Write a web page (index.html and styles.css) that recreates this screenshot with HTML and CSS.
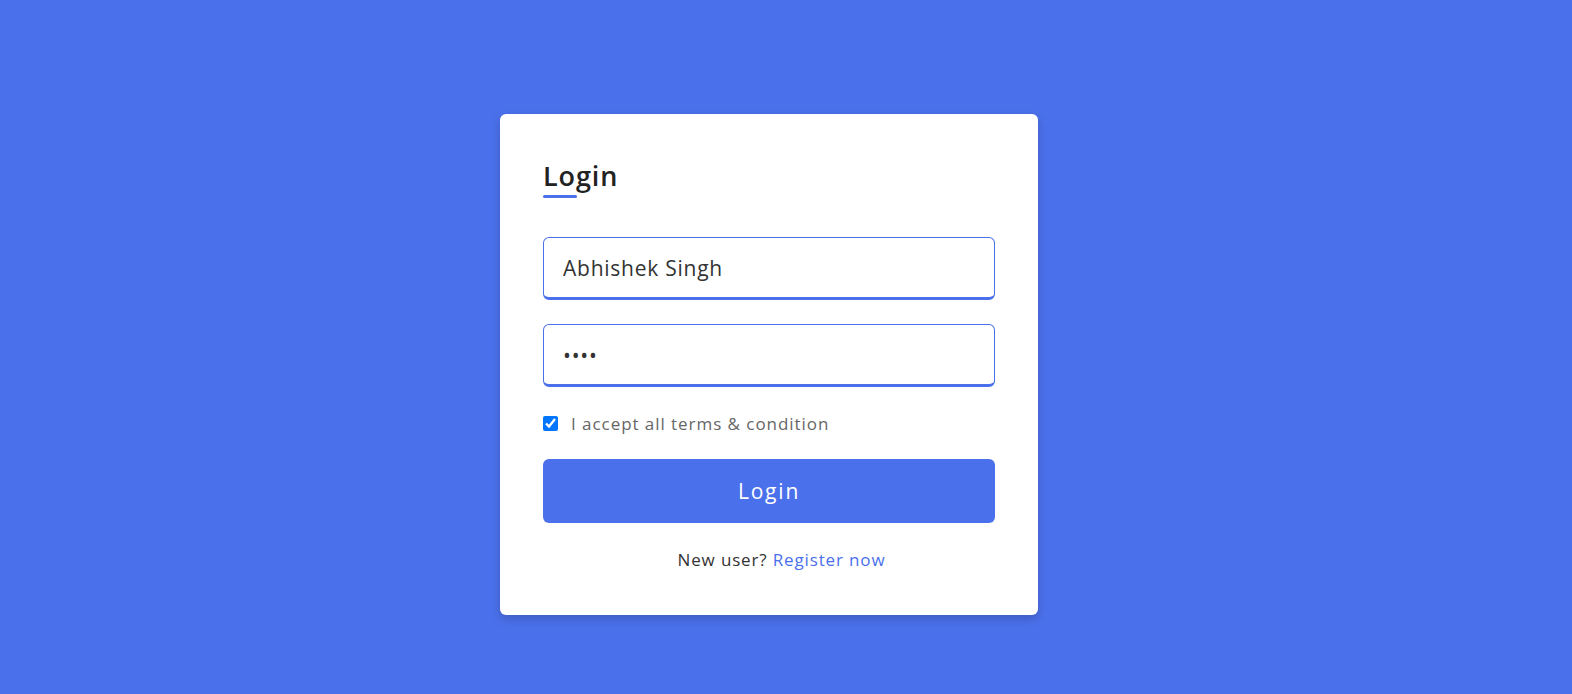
FILE: index.html
```html
<!DOCTYPE html>
<html lang="en">
<head>
<meta charset="utf-8">
<title>Login</title>
<link rel="stylesheet" href="styles.css">
</head>
<body>
<main class="page">
  <form class="card">
    <h2 class="title">Login</h2>
    <input class="field" type="text" value="Abhishek Singh">
    <input class="field" type="password" value="1234">
    <label class="terms">
      <input class="check" type="checkbox" checked>
      <span>I accept all terms &amp; condition</span>
    </label>
    <button class="btn" type="button">Login</button>
    <p class="footer">New user? <a class="link" href="#">Register now</a></p>
  </form>
</main>
</body>
</html>
```

FILE: styles.css
```css
* { box-sizing: border-box; }
html, body { margin: 0; padding: 0; }
body {
  background: #4b70eb;
  font-family: "Open Sans", "Liberation Sans", sans-serif;
}
.page {
  min-height: 694px;
  display: flex;
  align-items: center;
  justify-content: center;
  padding: 34px 34px 0 0;
}
.card {
  width: 538px;
  background: #fff;
  border-radius: 6px;
  padding: 48px 43px 42px;
  box-shadow: 0 4px 10px rgba(0, 0, 0, 0.18);
  display: flex;
  flex-direction: column;
}
.title {
  margin: 0;
  font-size: 27px;
  line-height: 27px;
  font-weight: 600;
  color: #222;
  letter-spacing: 0.9px;
}
.title::after {
  content: "";
  display: block;
  width: 34px;
  height: 3px;
  margin-top: 6px;
  border-radius: 2px;
  background: #4b70eb;
}
.field {
  height: 63px;
  margin: 39px 0 0;
  padding: 2px 19px 0;
  border: 1px solid #4b70eb;
  border-bottom-width: 3px;
  border-radius: 6px;
  font-family: inherit;
  font-size: 21px;
  color: #333;
  letter-spacing: 0.75px;
  outline: none;
}
.field + .field { margin-top: 24px; }
.terms {
  margin-top: 24px;
  height: 26px;
  display: flex;
  align-items: center;
  gap: 13px;
  font-size: 17px;
  color: #666;
  letter-spacing: 0.95px;
}
.check {
  width: 15px;
  height: 15px;
  margin: 0;
}
.btn {
  margin-top: 22px;
  height: 64px;
  border: 0;
  border-radius: 6px;
  background: #4b70eb;
  color: #fff;
  font-family: inherit;
  font-size: 21px;
  letter-spacing: 1.8px;
}
.footer {
  margin: 24px 0 0;
  line-height: 26px;
  font-size: 17px;
  color: #333;
  text-align: center;
  padding-left: 25px;
  letter-spacing: 0.85px;
}
.link {
  color: #4b70eb;
  text-decoration: none;
}
```
